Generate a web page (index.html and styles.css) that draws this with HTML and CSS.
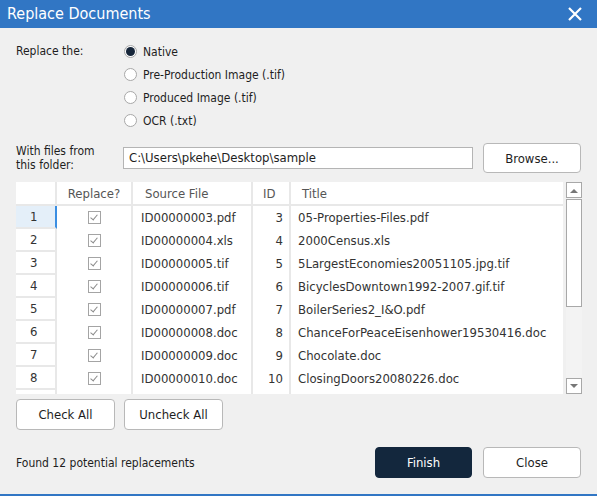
FILE: index.html
```html
<!DOCTYPE html>
<html>
<head>
<meta charset="utf-8">
<link rel="stylesheet" href="styles.css">
</head>
<body>
<div class="dialog">
  <div class="titlebar">
    <span class="title">Replace Documents</span>
    <svg class="close" width="16" height="16" viewBox="0 0 16 16"><path d="M2 2 L14 14 M14 2 L2 14" stroke="#fff" stroke-width="2.2" fill="none"/></svg>
  </div>
  <div class="content">
    <div class="replace-row">
      <div class="label">Replace the:</div>
      <div class="radios">
        <div class="radio-item"><span class="radio checked"></span>Native</div>
        <div class="radio-item"><span class="radio"></span>Pre-Production Image (.tif)</div>
        <div class="radio-item"><span class="radio"></span>Produced Image (.tif)</div>
        <div class="radio-item"><span class="radio"></span>OCR (.txt)</div>
      </div>
    </div>
    <div class="folder-row">
      <div class="label two-line">With files from<br>this folder:</div>
      <div class="input">C:\Users\pkehe\Desktop\sample</div>
      <button class="btn browse">Browse...</button>
    </div>
    <div class="table-wrap">
      <div class="grid">
        <div class="row head">
          <div class="c rh"></div>
          <div class="c chk">Replace?</div>
          <div class="c src">Source File</div>
          <div class="c id">ID</div>
          <div class="c ttl">Title</div>
        </div>
        <div class="row"><div class="c rh current">1</div><div class="c chk"><span class="cb"></span></div><div class="c src">ID00000003.pdf</div><div class="c id">3</div><div class="c ttl">05-Properties-Files.pdf</div></div>
        <div class="row"><div class="c rh">2</div><div class="c chk"><span class="cb"></span></div><div class="c src">ID00000004.xls</div><div class="c id">4</div><div class="c ttl">2000Census.xls</div></div>
        <div class="row"><div class="c rh">3</div><div class="c chk"><span class="cb"></span></div><div class="c src">ID00000005.tif</div><div class="c id">5</div><div class="c ttl">5LargestEconomies20051105.jpg.tif</div></div>
        <div class="row"><div class="c rh">4</div><div class="c chk"><span class="cb"></span></div><div class="c src">ID00000006.tif</div><div class="c id">6</div><div class="c ttl">BicyclesDowntown1992-2007.gif.tif</div></div>
        <div class="row"><div class="c rh">5</div><div class="c chk"><span class="cb"></span></div><div class="c src">ID00000007.pdf</div><div class="c id">7</div><div class="c ttl">BoilerSeries2_I&amp;O.pdf</div></div>
        <div class="row"><div class="c rh">6</div><div class="c chk"><span class="cb"></span></div><div class="c src">ID00000008.doc</div><div class="c id">8</div><div class="c ttl">ChanceForPeaceEisenhower19530416.doc</div></div>
        <div class="row"><div class="c rh">7</div><div class="c chk"><span class="cb"></span></div><div class="c src">ID00000009.doc</div><div class="c id">9</div><div class="c ttl">Chocolate.doc</div></div>
        <div class="row"><div class="c rh">8</div><div class="c chk"><span class="cb"></span></div><div class="c src">ID00000010.doc</div><div class="c id">10</div><div class="c ttl">ClosingDoors20080226.doc</div></div>
        <div class="row"><div class="c rh"></div><div class="c chk"></div><div class="c src"></div><div class="c id"></div><div class="c ttl"></div></div>
      </div>
      <div class="scrollbar">
        <div class="sb-btn"><svg width="8" height="5" viewBox="0 0 8 5"><path d="M0 5 L4 1 L8 5 Z" fill="#777"/></svg></div>
        <div class="sb-thumb"></div>
        <div class="sb-track"></div>
        <div class="sb-btn"><svg width="8" height="5" viewBox="0 0 8 5"><path d="M0 0 L4 4 L8 0 Z" fill="#777"/></svg></div>
      </div>
    </div>
    <div class="check-row">
      <button class="btn">Check All</button>
      <button class="btn">Uncheck All</button>
    </div>
    <div class="footer">
      <div class="found">Found 12 potential replacements</div>
      <button class="btn primary">Finish</button>
      <button class="btn">Close</button>
    </div>
  </div>
</div>
</body>
</html>
```
FILE: styles.css
```css
html, body {
  margin: 0;
  padding: 0;
  background: #f0f0f0;
}
body {
  font-family: "DejaVu Sans Condensed", "DejaVu Sans", sans-serif;
  font-stretch: condensed;
  font-size: 12px;
  color: #1e1e1e;
}
.dialog {
  width: 597px;
  height: 496px;
  box-sizing: border-box;
  border-bottom: 2px solid #3176c4;
  display: flex;
  flex-direction: column;
}
.titlebar {
  height: 28px;
  background: #3176c4;
  display: flex;
  align-items: center;
  justify-content: space-between;
  padding: 0 14px 0 7px;
  flex: none;
}
.title {
  color: #fff;
  font-size: 16px;
  padding-bottom: 1px;
}
.close {
  display: block;
}
.content {
  padding: 0 16px 0 16px;
  display: flex;
  flex-direction: column;
}
.replace-row {
  display: flex;
  margin-top: 12px;
}
.label {
  width: 108px;
  line-height: 23px;
  flex: none;
}
.radios {
  display: flex;
  flex-direction: column;
}
.radio-item {
  height: 23px;
  display: flex;
  align-items: center;
}
.radio {
  width: 11px;
  height: 11px;
  border: 1px solid #a8a8a8;
  border-radius: 50%;
  background: #fff;
  margin-right: 6px;
  box-sizing: content-box;
  display: flex;
  align-items: center;
  justify-content: center;
}
.radio.checked::after {
  content: "";
  width: 9px;
  height: 9px;
  border-radius: 50%;
  background: #17263a;
}
.folder-row {
  display: flex;
  align-items: center;
  margin-top: 11px;
  height: 30px;
}
.label.two-line {
  line-height: 14px;
  width: 107px;
}
.input {
  height: 20px;
  border: 1px solid #b4b4b4;
  background: #fff;
  line-height: 20px;
  padding-left: 5px;
  box-sizing: content-box;
  font-size: 13px;
  margin-right: 10px;
  flex: none;
  width: 343px;
}
.btn {
  font-family: inherit;
  font-stretch: condensed;
  font-size: 13px;
  color: #1e1e1e;
  background: #fff;
  border: 1px solid #b8b8b8;
  border-radius: 4px;
  width: 99px;
  height: 31px;
  padding: 0;
  flex: none;
}
.browse {
  height: 30px;
  width: 98px;
}
.table-wrap {
  margin-top: 9px;
  height: 212px;
  display: flex;
  width: 566px;
}
.grid {
  width: 547px;
  height: 212px;
  overflow: hidden;
  background: #fff;
  font-size: 13px;
  color: #333;
}
.row {
  display: grid;
  grid-template-columns: 41px 76px 120px 38px 1fr;
  height: 23px;
}
.row.head {
  height: 24px;
  color: #555;
}
.c {
  border-right: 2px solid #e8e8e8;
  display: flex;
  align-items: center;
  white-space: nowrap;
  overflow: hidden;
  box-sizing: border-box;
}
.head .c {
  border-bottom: 2px solid #e8e8e8;
}
.c.ttl {
  border-right: none;
  padding-left: 7px;
}
.head .c.ttl {
  padding-left: 11px;
}
.c.rh {
  padding-left: 14px;
  border-bottom: 2px solid #e8e8e8;
}
.c.rh.current {
  background: #e4eff9;
  border-right-color: #3a8ee2;
}
.c.chk {
  justify-content: center;
}
.c.src {
  padding-left: 8px;
}
.head .c.src {
  padding-left: 12px;
}
.c.id {
  justify-content: flex-end;
  padding-right: 6px;
}
.head .c.id {
  justify-content: flex-start;
  padding-left: 10px;
}
.cb {
  width: 11px;
  height: 11px;
  border: 1px solid #a4a4a4;
  background: #fff;
  position: relative;
}
.cb::after {
  content: "";
  position: absolute;
  left: 3px;
  top: 1px;
  width: 3px;
  height: 6px;
  border: solid #8a8a8a;
  border-width: 0 1.5px 1.5px 0;
  transform: rotate(40deg);
}
.scrollbar {
  margin-left: 3px;
  width: 16px;
  display: flex;
  flex-direction: column;
  background: #f3f3f3;
}
.sb-btn {
  border: 1px solid #a8a8a8;
  background: #fff;
  display: flex;
  align-items: center;
  justify-content: center;
  box-sizing: border-box;
  flex: none;
  height: 16px;
}
.sb-thumb {
  height: 108px;
  margin-top: 1px;
  border: 1px solid #a8a8a8;
  background: #fff;
  box-sizing: border-box;
  flex: none;
}
.sb-track {
  flex: 1;
}
.check-row {
  display: flex;
  gap: 9px;
  margin-top: 5px;
}
.footer {
  display: flex;
  align-items: center;
  margin-top: 17px;
}
.found {
  flex: 1;
  font-size: 12px;
}
.footer .btn.primary {
  width: 97px;
  margin-right: 11px;
}
.footer .btn {
  width: 98px;
}
.btn.primary {
  background: #13273d;
  border-color: #13273d;
  color: #fff;
}
```
